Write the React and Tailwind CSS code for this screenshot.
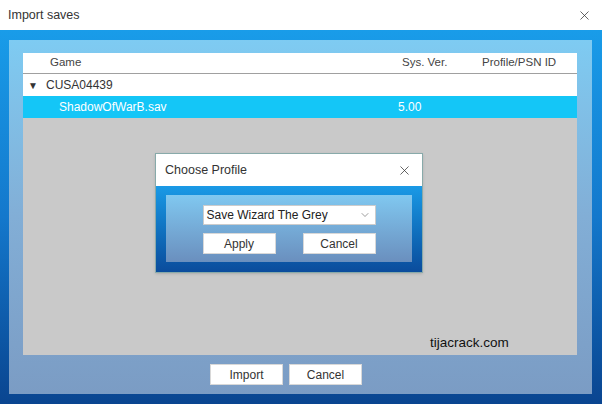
import { X, ChevronDown } from "lucide-react";

const font = { fontFamily: '"Liberation Sans", Arial, sans-serif' };

function WinButton({ children, className = "" }) {
  return (
    <div
      className={`flex items-center justify-center bg-white border border-[#d8d8d8] text-[12px] text-[#333] ${className}`}
    >
      {children}
    </div>
  );
}

function ChooseProfile() {
  return (
    <div className="absolute left-[155px] top-[153px] w-[268px] h-[120px] flex flex-col border border-[#8aa] shadow-sm">
      <div className="h-[32px] bg-white flex items-center justify-between pl-[9px] pr-[10px]">
        <span className="text-[12.5px] text-[#333]">Choose Profile</span>
        <X size={15} strokeWidth={1.2} className="text-[#333]" />
      </div>
      <div className="flex-1 bg-gradient-to-b from-[#1a9ae6] to-[#0b4c9c] px-[10px] pt-[9px] pb-[10px]">
        <div className="h-full bg-gradient-to-b from-[#80c8f0] to-[#6a8fbe] flex flex-col items-center pt-[10px] gap-[8px]">
          <div className="w-[173px] h-[20px] bg-white border border-[#ccc] flex items-center justify-between pl-[3px] pr-[4px]">
            <span className="text-[12px] text-[#222]">Save Wizard The Grey</span>
            <ChevronDown size={12} strokeWidth={1.3} className="text-[#666]" />
          </div>
          <div className="w-[173px] flex justify-between">
            <WinButton className="w-[73px] h-[21px]">Apply</WinButton>
            <WinButton className="w-[73px] h-[21px]">Cancel</WinButton>
          </div>
        </div>
      </div>
    </div>
  );
}

export default function App() {
  return (
    <div className="relative w-[602px] h-[404px] flex flex-col overflow-hidden" style={font}>
      <div className="h-[30px] bg-white flex items-center justify-between pl-[8px] pr-[10px] shrink-0">
        <span className="text-[12.5px] text-[#333]">Import saves</span>
        <X size={15} strokeWidth={1.2} className="text-[#333]" />
      </div>
      <div className="flex-1 bg-gradient-to-b from-[#199ce9] via-[#1478cc] to-[#0a4590] pt-[10px] pl-[9px] pr-[10px] pb-[10px]">
        <div className="h-full bg-gradient-to-b from-[#7ecbf2] via-[#82aed6] to-[#7b9cc4] pt-[13px] pl-[14px] pr-[15px] flex flex-col">
          <div className="h-[302px] bg-[#c9c9c9] flex flex-col relative">
            <div className="h-[21px] bg-white border-b border-[#a0a0a0] flex items-center text-[11.5px] text-[#444]">
              <span className="w-[379px] pl-[27px]">Game</span>
              <span className="w-[80px]">Sys. Ver.</span>
              <span>Profile/PSN ID</span>
            </div>
            <div className="h-[22px] bg-white flex items-center text-[12px] text-[#333]">
              <span className="pl-[5px] w-[23px] text-[10px]">▼</span>
              <span>CUSA04439</span>
            </div>
            <div className="h-[22px] bg-[#14c6f7] flex items-center text-[12px] text-white">
              <span className="w-[375px] pl-[36px]">ShadowOfWarB.sav</span>
              <span>5.00</span>
            </div>
            <span className="absolute left-[407px] top-[280px] text-[13.5px] text-[#111]">tijacrack.com</span>
          </div>
          <div className="flex gap-[6px] pt-[9px] pl-[187px]">
            <WinButton className="w-[73px] h-[21px]">Import</WinButton>
            <WinButton className="w-[73px] h-[21px]">Cancel</WinButton>
          </div>
        </div>
      </div>
      <ChooseProfile />
    </div>
  );
}
